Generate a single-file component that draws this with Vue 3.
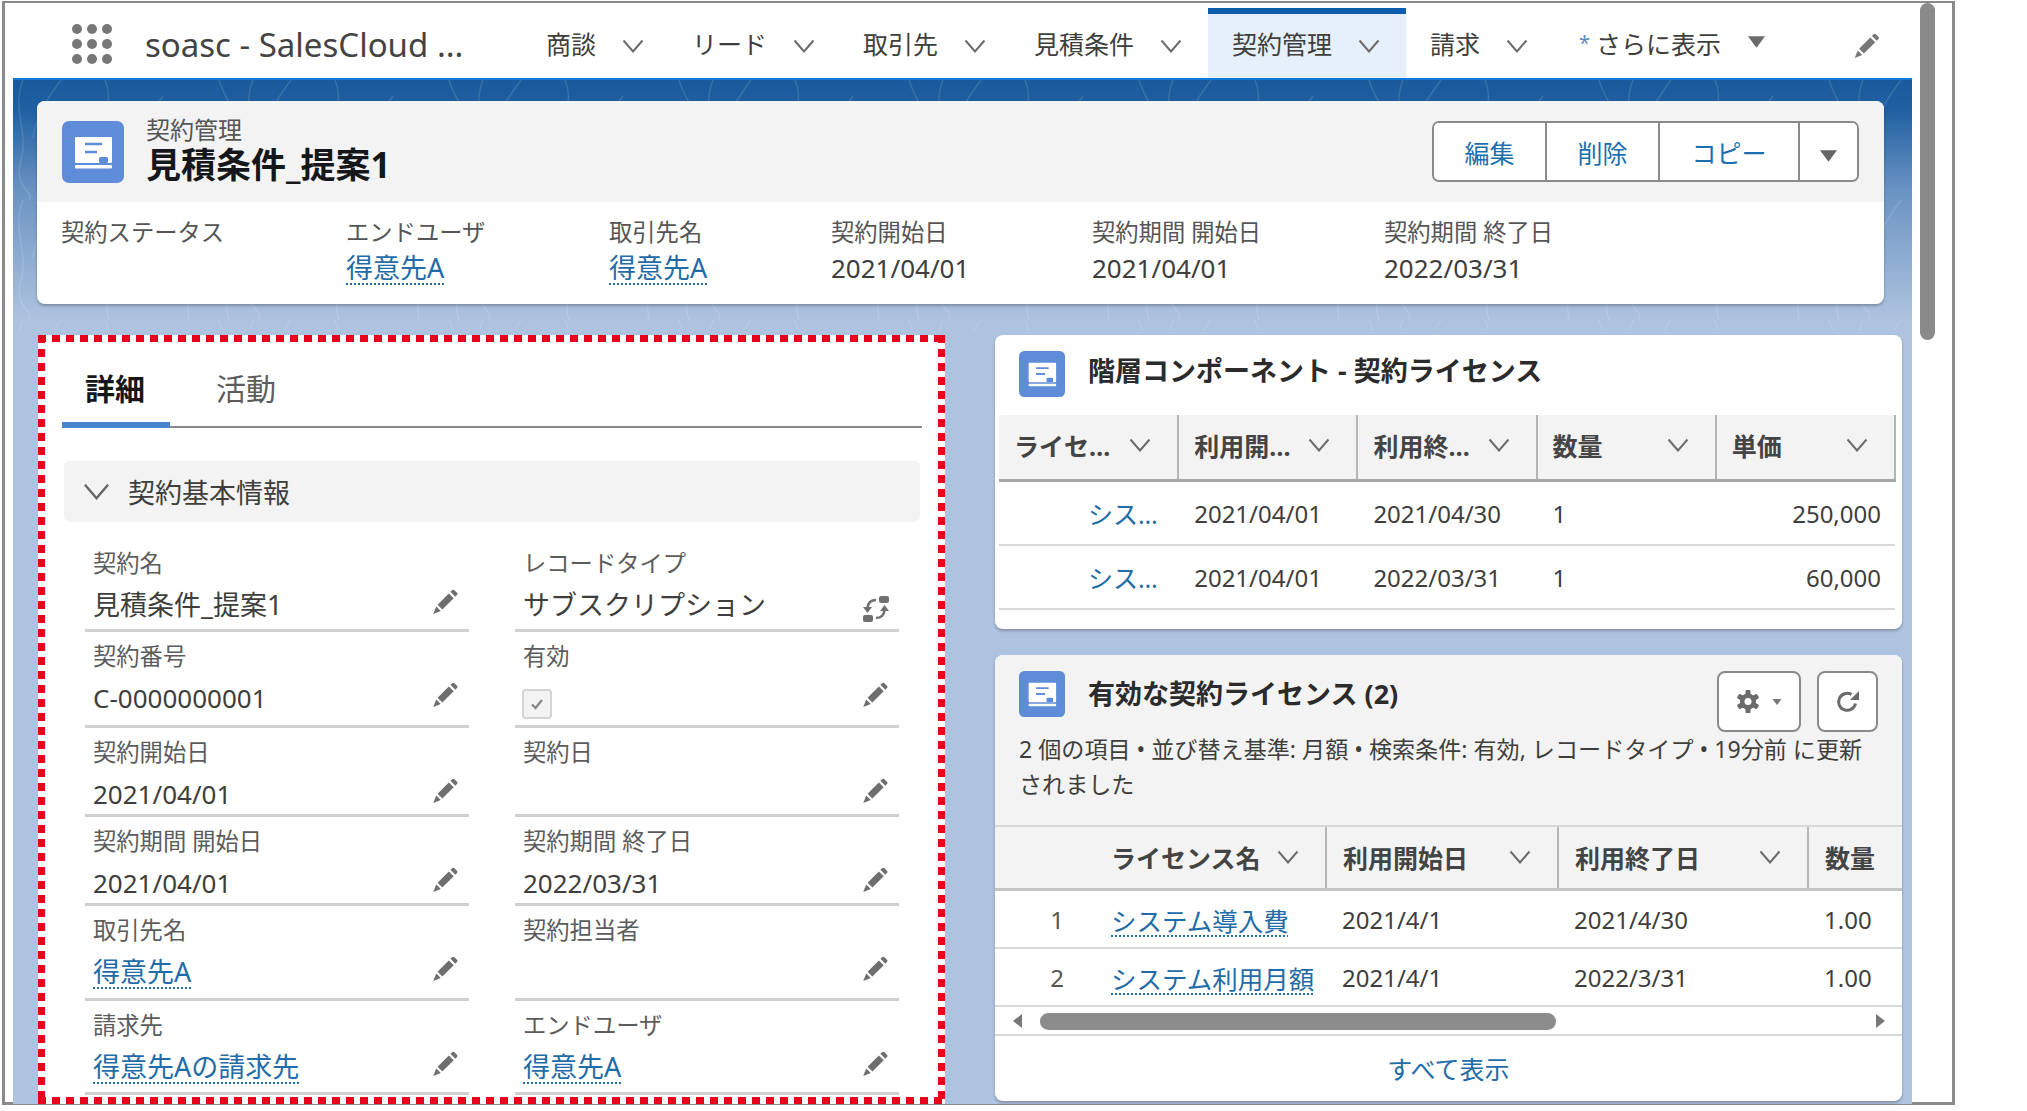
<template>
	<div class="frame">
		<svg class="icon-defs" aria-hidden="true">
			<symbol id="chevron" viewBox="0 0 22 14">
				<path d="M1.5 1.5 11 12.5 20.5 1.5" fill="none" stroke="currentColor" stroke-width="2" />
			</symbol>
			<symbol id="caret" viewBox="0 0 20 12">
				<path d="M1 0h18l-9 12z" fill="currentColor" />
			</symbol>
			<symbol id="pencil" viewBox="0 0 26 26">
				<path d="M7 16.500 17.500 6l4.500 4.500L11.500 21z" fill="currentColor" />
				<path d="M19 4.500l1.500-1.500c.7-.7 1.500-.7 2.200 0l2.300 2.300c.7.7.7 1.500 0 2.200l-1.500 1.500z" fill="currentColor" />
				<path d="M5.800 18 10 22.200 3 25z" fill="currentColor" />
			</symbol>
			<symbol id="sync" viewBox="0 0 26 26">
				<rect x="16" y="0" width="10" height="7" rx="2" fill="currentColor" />
				<rect x="0" y="19" width="10" height="7" rx="2" fill="currentColor" />
				<path d="M13 4C8 4 5 7 4.500 12" fill="none" stroke="currentColor" stroke-width="2.500" />
				<path d="M0 11h9l-4.500 6z" fill="currentColor" />
				<path d="M13 22c5 0 8-3 8.500-8" fill="none" stroke="currentColor" stroke-width="2.500" />
				<path d="M17 15h9l-4.500-6z" fill="currentColor" />
			</symbol>
			<symbol id="record" viewBox="0 0 62 62">
				<rect width="62" height="62" rx="7" fill="#5f8cd8" />
				<rect x="13" y="16" width="37" height="26" rx="1" fill="#fff" />
				<path d="M23 23h17M23 31h12" stroke="#5f8cd8" stroke-width="2.500" />
				<rect x="37" y="36" width="9" height="6" rx="1.500" fill="#5f8cd8" />
				<rect x="13" y="44" width="37" height="3.500" rx="1" fill="#fff" />
			</symbol>
		</svg>

		<div class="page">
			<nav class="nav">
				<div class="waffle">
					<span v-for="n in 9" :key="n" class="waffle-dot"></span>
				</div>
				<div class="app-name">soasc - SalesCloud ...</div>
				<div v-for="item in navItems" :key="item.label" class="nav-tab" :class="{ active: item.active }">
					<span class="nav-label">{{ item.label }}</span>
					<svg class="chevron"><use href="#chevron" /></svg>
				</div>
				<div class="nav-more">
					<span class="nav-star">*</span>
					<span class="nav-label">さらに表示</span>
					<svg class="nav-caret"><use href="#caret" /></svg>
				</div>
				<svg class="nav-pencil"><use href="#pencil" /></svg>
			</nav>

			<div class="stage">
				<svg class="contours" aria-hidden="true" width="1899" height="250">
					<defs>
						<pattern id="contour" width="230" height="120" patternUnits="userSpaceOnUse">
							<path d="M10 0c-12 30 6 50-2 80s14 30 8 40M48 0C30 24 22 40 20 58M92 0c10 22-6 36 4 58s-8 42 0 62M130 22C120 40 112 50 104 60M150 16c-10 14-24 34-34 48M206 0c8 26 26 38 18 70s-14 30-8 50M176 120c-6-30 12-44 4-68" fill="none" stroke="#fff" stroke-opacity="0.13" stroke-width="1.300" />
						</pattern>
					</defs>
					<rect width="1899" height="250" fill="url(#contour)" />
				</svg>

				<header class="record-head">
					<div class="record-top">
						<svg class="record-icon"><use href="#record" /></svg>
						<div class="record-titles">
							<div class="record-type">契約管理</div>
							<h1 class="record-name">見積条件_提案1</h1>
						</div>
						<div class="btn-group">
							<button class="btn btn-edit">編集</button>
							<button class="btn btn-edit">削除</button>
							<button class="btn btn-copy">コピー</button>
							<button class="btn btn-menu"><svg class="btn-caret"><use href="#caret" /></svg></button>
						</div>
					</div>
					<div class="record-meta">
						<div v-for="item in metaItems" :key="item.label">
							<div class="meta-label">{{ item.label }}</div>
							<div class="meta-value">
								<a v-if="item.link" class="link">{{ item.value }}</a>
								<template v-else>{{ item.value }}</template>
							</div>
						</div>
					</div>
				</header>

				<main class="main">
					<section class="detail-card">
						<div class="tabs">
							<div class="tab tab-active">詳細</div>
							<div class="tab tab-other">活動</div>
						</div>
						<div class="section-head">
							<svg class="section-chevron"><use href="#chevron" /></svg>
							<span>契約基本情報</span>
						</div>
						<div class="fields">
							<div v-for="field in fields" :key="field.label" class="field">
								<div class="field-label">{{ field.label }}</div>
								<div class="field-value">
									<a v-if="field.link" class="link">{{ field.value }}</a>
									<span v-else-if="field.check" class="checkbox">
										<svg viewBox="0 0 16 16" width="16" height="16"><path d="M3 8.500l3.500 3.500L13 4" fill="none" stroke="#8a8a8a" stroke-width="2.400" /></svg>
									</span>
									<span v-else :class="{ 'value-jp': field.jp }">{{ field.value }}</span>
									<svg v-if="field.sync" class="field-sync"><use href="#sync" /></svg>
									<svg v-else class="field-pencil"><use href="#pencil" /></svg>
								</div>
							</div>
						</div>
					</section>

					<div class="side">
						<section class="card card-hier">
							<div class="card-title-row">
								<svg class="card-icon"><use href="#record" /></svg>
								<h2 class="card-title">階層コンポーネント - 契約ライセンス</h2>
							</div>
							<table class="grid grid-hier">
								<thead>
									<tr>
										<th v-for="col in hierColumns" :key="col">
											<div class="th-inner">
												<span class="th-label">{{ col }}</span>
												<svg class="chevron"><use href="#chevron" /></svg>
											</div>
										</th>
									</tr>
								</thead>
								<tbody>
									<tr v-for="row in hierRows" :key="row.end">
										<td class="cell-name">{{ row.name }}</td>
										<td>{{ row.start }}</td>
										<td>{{ row.end }}</td>
										<td>{{ row.qty }}</td>
										<td class="cell-num">{{ row.price }}</td>
									</tr>
								</tbody>
							</table>
						</section>

						<section class="card card-list">
							<div class="list-head">
								<div class="list-title-row">
									<svg class="card-icon"><use href="#record" /></svg>
									<h2 class="card-title list-title">有効な契約ライセンス (2)</h2>
									<button class="tool-btn tool-gear">
										<svg class="gear" viewBox="0 0 24 24">
											<g fill="#6b6b6b">
												<rect x="9.500" y="0.500" width="5" height="23" rx="1" />
												<rect x="9.500" y="0.500" width="5" height="23" rx="1" transform="rotate(60 12 12)" />
												<rect x="9.500" y="0.500" width="5" height="23" rx="1" transform="rotate(120 12 12)" />
												<circle cx="12" cy="12" r="8" />
											</g>
											<circle cx="12" cy="12" r="3.500" fill="#fff" />
										</svg>
										<svg class="gear-caret"><use href="#caret" /></svg>
									</button>
									<button class="tool-btn tool-refresh">
										<svg class="refresh" viewBox="0 0 24 24">
											<path d="M19.500 13.500A8.500 8.500 0 1 1 15.500 4.500" fill="none" stroke="#6b6b6b" stroke-width="3" />
											<path d="M23 1v9h-9z" fill="#6b6b6b" />
										</svg>
									</button>
								</div>
								<p class="list-sub">2 個の項目 • 並び替え基準: 月額 • 検索条件: 有効, レコードタイプ • 19分前 に更新されました</p>
							</div>
							<table class="grid grid-list">
								<colgroup>
									<col class="col-no" />
									<col class="col-name" />
									<col class="col-start" />
									<col class="col-end" />
									<col class="col-qty" />
								</colgroup>
								<thead>
									<tr>
										<th class="th-blank"></th>
										<th v-for="col in listColumns" :key="col.label">
											<div class="th-inner">
												<span class="th-full">{{ col.label }}</span>
												<svg v-if="col.sort" class="chevron"><use href="#chevron" /></svg>
											</div>
										</th>
									</tr>
								</thead>
								<tbody>
									<tr v-for="row in listRows" :key="row.no">
										<td class="cell-no">{{ row.no }}</td>
										<td><a class="link">{{ row.name }}</a></td>
										<td>{{ row.start }}</td>
										<td>{{ row.end }}</td>
										<td>{{ row.qty }}</td>
									</tr>
								</tbody>
							</table>
							<div class="hscroll">
								<span class="arrow arrow-left"></span>
								<span class="hscroll-thumb"></span>
								<span class="arrow arrow-right"></span>
							</div>
							<div class="view-all">すべて表示</div>
						</section>
					</div>
				</main>
			</div>
		</div>

		<div class="gutter">
			<div class="gutter-thumb"></div>
		</div>
	</div>
</template>

<script setup>
const navItems = [
	{ label: '商談' },
	{ label: 'リード' },
	{ label: '取引先' },
	{ label: '見積条件' },
	{ label: '契約管理', active: true },
	{ label: '請求' }
]

const metaItems = [
	{ label: '契約ステータス', value: '' },
	{ label: 'エンドユーザ', value: '得意先A', link: true },
	{ label: '取引先名', value: '得意先A', link: true },
	{ label: '契約開始日', value: '2021/04/01' },
	{ label: '契約期間 開始日', value: '2021/04/01' },
	{ label: '契約期間 終了日', value: '2022/03/31' }
]

const fields = [
	{ label: '契約名', value: '見積条件_提案1', jp: true },
	{ label: 'レコードタイプ', value: 'サブスクリプション', sync: true, jp: true },
	{ label: '契約番号', value: 'C-0000000001' },
	{ label: '有効', check: true },
	{ label: '契約開始日', value: '2021/04/01' },
	{ label: '契約日', value: '' },
	{ label: '契約期間 開始日', value: '2021/04/01' },
	{ label: '契約期間 終了日', value: '2022/03/31' },
	{ label: '取引先名', value: '得意先A', link: true },
	{ label: '契約担当者', value: '' },
	{ label: '請求先', value: '得意先Aの請求先', link: true },
	{ label: 'エンドユーザ', value: '得意先A', link: true }
]

const hierColumns = ['ライセンス名', '利用開始日', '利用終了日', '数量', '単価']

const hierRows = [
	{ name: 'システム導入費', start: '2021/04/01', end: '2021/04/30', qty: '1', price: '250,000' },
	{ name: 'システム利用月額', start: '2021/04/01', end: '2022/03/31', qty: '1', price: '60,000' }
]

const listColumns = [
	{ label: 'ライセンス名', sort: true },
	{ label: '利用開始日', sort: true },
	{ label: '利用終了日', sort: true },
	{ label: '数量', sort: false }
]

const listRows = [
	{ no: 1, name: 'システム導入費', start: '2021/4/1', end: '2021/4/30', qty: '1.00' },
	{ no: 2, name: 'システム利用月額', start: '2021/4/1', end: '2022/3/31', qty: '1.00' }
]
</script>

<style>
body {
	margin: 0;
	background: #fff;
}
</style>

<style scoped>
.frame {
	display: flex;
	box-sizing: border-box;
	width: 1953px;
	height: 1104px;
	margin: 1px 0 0 2px;
	border: 3px solid #8a8a8a;
	border-top-width: 2px;
	font-family: "Noto Sans", "Noto Sans CJK JP", sans-serif;
	font-size: 24px;
	color: #3e3e3c;
}

.icon-defs {
	position: absolute;
	width: 0;
	height: 0;
}

.page {
	display: flex;
	flex-direction: column;
	flex: 0 0 1907px;
}

/* top nav */
.nav {
	display: flex;
	align-items: flex-start;
	height: 77px;
	padding-left: 67px;
	background: #fff;
}

.waffle {
	display: grid;
	grid-template-columns: repeat(3, 10px);
	gap: 5px;
	margin-top: 21px;
}

.waffle-dot {
	width: 10px;
	height: 10px;
	border-radius: 50%;
	background: #777;
}

.app-name {
	flex: 0 0 410px;
	box-sizing: border-box;
	padding-left: 33px;
	margin-top: 19px;
	font-size: 33px;
	line-height: 46px;
	color: #444;
	white-space: nowrap;
}

.nav-tab {
	display: flex;
	align-items: center;
	height: 64px;
	margin-top: 11px;
	padding: 0 24px;
	gap: 26px;
}

.nav-tab.active {
	margin-left: 2px;
	padding-right: 26px;
	background: #e6f0fa;
	box-shadow: 0 -6px 0 #0b5cab;
}

.nav-label {
	font-size: 25px;
	line-height: 32px;
	margin-top: -4px;
	white-space: nowrap;
}

.chevron {
	flex: none;
	width: 22px;
	height: 14px;
	color: #6b6b6b;
}

.nav-more {
	display: flex;
	align-items: center;
	height: 64px;
	margin-top: 11px;
	padding-left: 27px;
}

.nav-star {
	width: 17px;
	margin-top: -8px;
	font-size: 20px;
	color: #5b8ac0;
}

.nav-caret {
	width: 19px;
	height: 12px;
	margin-left: 26px;
	margin-top: -8px;
	color: #6b6b6b;
}

.nav-pencil {
	width: 29px;
	height: 28px;
	margin: 28px 0 0 85px;
	color: #777;
}

/* blue background */
.stage {
	position: relative;
	flex: 1;
	margin-left: 8px;
	padding: 21px 10px 0 24px;
	border-top: 2px solid #1079d6;
	background: linear-gradient(180deg, #1a5a9c 0, #1f60a2 30px, #6a93c2 110px, #aec3df 240px, #aec3df 100%);
}

.contours {
	position: absolute;
	top: 0;
	left: 0;
}

/* record header */
.record-head {
	position: relative;
	width: 1847px;
	height: 203px;
	border-radius: 8px;
	background: #fff;
	box-shadow: 0 2px 3px rgba(0, 0, 0, 0.25);
	overflow: hidden;
}

.record-top {
	display: flex;
	align-items: center;
	box-sizing: border-box;
	height: 101px;
	padding: 0 25px;
	background: #f3f3f3;
}

.record-icon {
	flex: none;
	width: 62px;
	height: 62px;
}

.record-titles {
	flex: 1;
	margin-left: 22px;
}

.record-type {
	font-size: 24px;
	line-height: 30px;
	margin-top: -3px;
	color: #555;
}

.record-name {
	margin: 0;
	font-size: 35px;
	font-weight: 700;
	line-height: 40px;
	color: #16171a;
}

.btn-group {
	display: flex;
	box-sizing: border-box;
	height: 61px;
	border: 2px solid #8a8a8a;
	border-radius: 7px;
	background: #fff;
	overflow: hidden;
}

.btn {
	padding: 0;
	border: 0;
	border-right: 2px solid #8a8a8a;
	background: #fff;
	font: inherit;
	font-size: 25px;
	color: #1b6fae;
}

.btn-edit {
	width: 113px;
}

.btn-copy {
	width: 140px;
}

.btn-menu {
	width: 57px;
	border-right: 0;
}

.btn-caret {
	width: 19px;
	height: 12px;
	color: #666;
}

.record-meta {
	display: grid;
	grid-template-columns: 285px 263px 222px 261px 292px 1fr;
	padding: 14px 0 0 24px;
}

.meta-label {
	font-size: 23.3px;
	line-height: 32px;
	color: #555;
	white-space: nowrap;
}

.meta-value {
	height: 40px;
	font-size: 26px;
	line-height: 40px;
	white-space: nowrap;
}

.link {
	font-size: 27px;
	color: #1f6ca8;
	text-decoration: underline dotted;
	text-decoration-thickness: 2px;
	text-underline-offset: 5px;
}

/* two columns */
.main {
	display: grid;
	grid-template-columns: 907px 907px;
	gap: 50px;
	margin: 31px 0 0 1px;
}

.detail-card {
	position: relative;
	box-sizing: border-box;
	height: 769px;
	padding: 20px 23px 0 24px;
	background:
		repeating-linear-gradient(90deg, #e8001c 0 8px, transparent 8px 14px) top / 100% 7px no-repeat,
		repeating-linear-gradient(90deg, #e8001c 0 8px, transparent 8px 14px) bottom / 100% 7px no-repeat,
		repeating-linear-gradient(180deg, #e8001c 0 8px, transparent 8px 14px) left / 7px 100% no-repeat,
		repeating-linear-gradient(180deg, #e8001c 0 8px, transparent 8px 14px) right / 7px 100% no-repeat,
		#fff;
}

.tabs {
	display: flex;
	height: 73px;
	box-sizing: border-box;
	border-bottom: 2px solid #8a8a8a;
}

.tab {
	height: 73px;
	box-sizing: border-box;
	padding: 0 25px 0 23px;
	font-size: 30px;
	line-height: 68px;
}

.tab-active {
	border-bottom: 6px solid #4a85d0;
	font-weight: 700;
	color: #16171a;
}

.tab-other {
	margin-left: 23px;
	color: #5c5c5c;
}

.section-head {
	display: flex;
	align-items: center;
	height: 61px;
	margin: 33px 2px 0 2px;
	padding-left: 19px;
	gap: 18px;
	border-radius: 6px;
	background: #f3f3f3;
	font-size: 27px;
	color: #3e3e3c;
}

.section-chevron {
	width: 27px;
	height: 17px;
	color: #666;
}

.fields {
	display: grid;
	grid-template-columns: 384px 384px;
	grid-template-rows: 96px 96px 89px 89px 95px 94px;
	column-gap: 46px;
	margin: 14px 0 0 23px;
}

.field {
	box-sizing: border-box;
	padding: 8px 11px 0 8px;
	border-bottom: 3px solid #d0d0d0;
}

.field:nth-child(-n + 2) {
	padding-top: 11px;
}

.field-label {
	font-size: 23.3px;
	line-height: 32px;
	color: #5c5c5c;
	white-space: nowrap;
}

.field-value {
	display: flex;
	align-items: center;
	justify-content: space-between;
	height: 40px;
	margin-top: 6px;
	font-size: 26px;
	line-height: 40px;
	white-space: nowrap;
}

.value-jp {
	font-size: 27px;
}

.field-pencil {
	flex: none;
	width: 28px;
	height: 28px;
	margin-bottom: 8px;
	color: #6e6e6e;
}

.field-sync {
	flex: none;
	width: 26px;
	height: 26px;
	margin: 8px -1px 0 0;
	color: #707070;
}

.checkbox {
	display: flex;
	align-items: center;
	justify-content: center;
	box-sizing: border-box;
	width: 30px;
	height: 30px;
	margin: 12px 0 0 -1px;
	border: 2px solid #d4d4d4;
	border-radius: 4px;
	background: #f3f3f3;
}

/* right side */
.side {
	display: flex;
	flex-direction: column;
	gap: 26px;
}

.card {
	border-radius: 8px;
	background: #fff;
	box-shadow: 0 2px 3px rgba(0, 0, 0, 0.25);
}

.card-hier {
	box-sizing: border-box;
	height: 294px;
	padding: 16px 6px 0 4px;
}

.card-title-row {
	display: flex;
	align-items: flex-start;
	height: 64px;
	padding-left: 20px;
}

.card-icon {
	flex: none;
	width: 46px;
	height: 46px;
}

.card-title {
	margin: 0 0 0 23px;
	font-size: 27px;
	font-weight: 700;
	line-height: 40px;
	color: #2b2b2b;
	white-space: nowrap;
}

.grid {
	width: 100%;
	table-layout: fixed;
	border-collapse: collapse;
	font-size: 24px;
}

.grid th {
	height: 64px;
	padding: 0;
	border-right: 2px solid #b5b5b5;
	border-bottom: 3px solid #a8a8a8;
	background: #f3f3f3;
	text-align: left;
	font-size: 25px;
	font-weight: 700;
	color: #444;
}

.grid .link {
	font-size: 25.5px;
}

.grid .th-blank {
	border-right: 0;
}

.th-inner {
	display: flex;
	align-items: center;
	justify-content: space-between;
	padding: 0 26px 4px 15px;
}

.th-label {
	max-width: 104px;
	overflow: hidden;
	text-overflow: ellipsis;
	white-space: nowrap;
}

.th-full {
	white-space: nowrap;
}

.grid-hier td {
	height: 62px;
	padding: 0 14px 0 16px;
	border-bottom: 2px solid #d8d8d8;
	white-space: nowrap;
}

.grid-hier .cell-name {
	padding: 0 14px 0 89px;
	overflow: hidden;
	text-overflow: ellipsis;
	color: #1f6ca8;
	font-size: 25px;
}

.grid-hier .cell-num {
	text-align: right;
}

.card-list {
	height: 446px;
	overflow: hidden;
}

.list-head {
	box-sizing: border-box;
	height: 172px;
	padding: 16px 24px 0;
	background: #f3f3f3;
	border-bottom: 2px solid #d8d8d8;
}

.list-title-row {
	display: flex;
	align-items: flex-start;
	height: 61px;
}

.list-title {
	flex: 1;
	line-height: 46px;
}

.tool-btn {
	display: flex;
	align-items: center;
	justify-content: center;
	box-sizing: border-box;
	height: 61px;
	padding: 0;
	border: 2px solid #8a8a8a;
	border-radius: 8px;
	background: #fff;
}

.tool-gear {
	width: 84px;
	gap: 12px;
}

.tool-refresh {
	width: 61px;
	margin-left: 16px;
}

.gear {
	width: 24px;
	height: 25px;
}

.gear-caret {
	width: 10px;
	height: 6px;
	color: #777;
}

.refresh {
	width: 24px;
	height: 24px;
}

.list-sub {
	width: 850px;
	margin: 0;
	font-size: 23.1px;
	line-height: 35px;
	color: #3e3e3c;
}

.col-no {
	width: 100px;
}

.col-name {
	width: 231px;
}

.col-start {
	width: 232px;
}

.col-end {
	width: 250px;
}

.grid-list th {
	height: 61px;
	border-bottom-width: 3px;
	border-bottom-color: #c4c4c4;
}

.grid-list th:last-child {
	border-right: 0;
}

.grid-list .th-inner {
	padding: 0 26px 2px 16px;
}

.grid-list td {
	height: 56px;
	padding: 0 0 0 16px;
	border-bottom: 2px solid #d8d8d8;
	white-space: nowrap;
}

.grid-list .cell-no {
	padding: 0 31px 0 0;
	text-align: right;
	color: #555;
}

.hscroll {
	position: relative;
	box-sizing: border-box;
	height: 29px;
	border-bottom: 2px solid #d8d8d8;
}

.hscroll-thumb {
	position: absolute;
	top: 6px;
	left: 45px;
	width: 516px;
	height: 17px;
	border-radius: 9px;
	background: #8c8c8c;
}

.arrow {
	position: absolute;
	top: 7px;
	border-style: solid;
	border-color: transparent;
	border-width: 7px 0;
}

.arrow-left {
	left: 18px;
	border-right: 9px solid #777;
}

.arrow-right {
	right: 17px;
	border-left: 9px solid #777;
}

.view-all {
	padding-top: 15px;
	text-align: center;
	font-size: 25px;
	line-height: 36px;
	color: #1f6ca8;
}

/* page scrollbar */
.gutter {
	flex: 1;
	padding-left: 8px;
}

.gutter-thumb {
	width: 15px;
	height: 337px;
	border-radius: 8px;
	background: #8a8a8a;
}
</style>
